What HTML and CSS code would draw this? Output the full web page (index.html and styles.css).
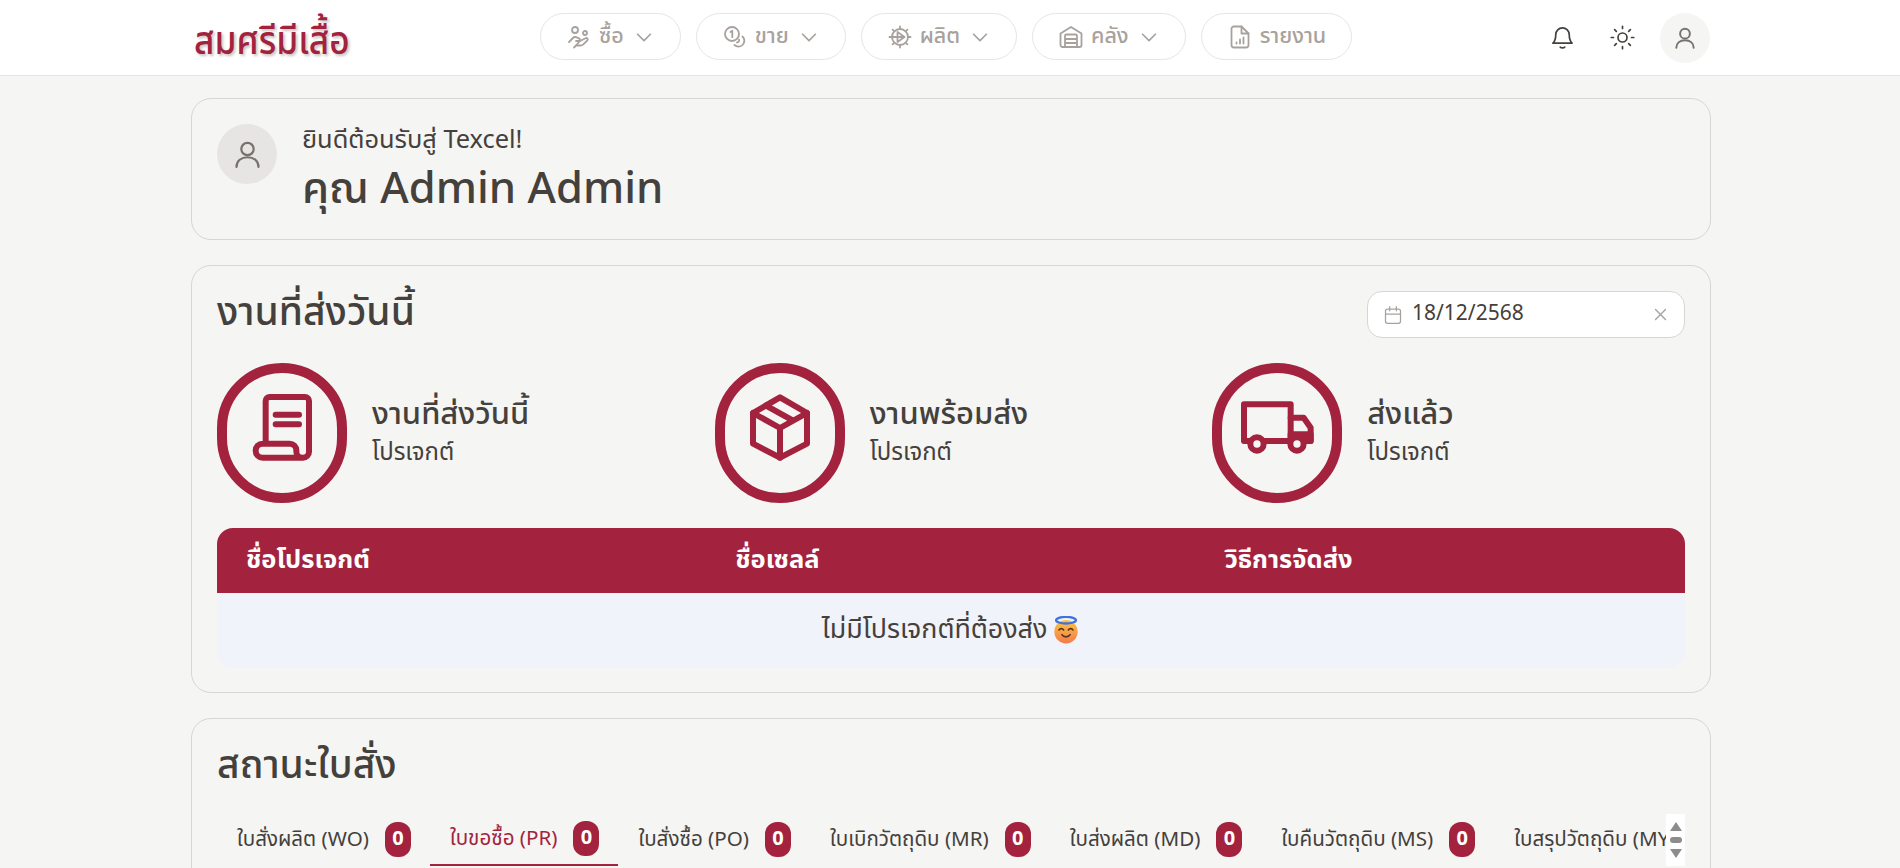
FILE: index.html
```html
<!DOCTYPE html>
<html lang="th">
<head>
    <meta charset="UTF-8">
    <meta name="viewport" content="width=device-width, initial-scale=1.0">
    <title>Texcel</title>
    <link rel="stylesheet" href="styles.css">
</head>
<body>
    <header class="topbar">
        <div class="topbar-inner">
            <div class="logo-wrap"><span class="logo">สมศรีมีเสื้อ</span></div>
            <nav class="nav">
                <a class="pill">
                    <svg class="pill-icon" viewBox="0 0 24 24"><circle cx="8" cy="5" r="3"/><circle cx="18" cy="8" r="2"/><path d="M2 17l4-4c1-1 2-1.200 3-.8l3 1.200c1.500.6 1 2.600-.5 2.600H9m4 0l5.500-2.800c1.600-.8 3 1 1.800 2.300l-4 3.800c-.8.800-1.800 1.200-2.800 1.200H9l-2 2z"/></svg>
                    <span>ซื้อ</span>
                    <svg class="chevron" viewBox="0 0 24 24"><path d="M5 9l7 7 7-7"/></svg>
                </a>
                <a class="pill">
                    <svg class="pill-icon" viewBox="0 0 24 24"><circle cx="9" cy="9" r="7"/><path d="M7.500 7l1.800-1.200v6.400"/><path d="M19.500 11.500a5.800 5.800 0 0 1-8 8.500M16 14.500c.5 1.500-.5 3-2 3"/></svg>
                    <span>ขาย</span>
                    <svg class="chevron" viewBox="0 0 24 24"><path d="M5 9l7 7 7-7"/></svg>
                </a>
                <a class="pill">
                    <svg class="pill-icon" viewBox="0 0 24 24"><circle cx="12" cy="12" r="8"/><path d="M12 1.500v2.500M12 20v2.500M1.500 12H4M20 12h2.500M4.600 4.600l1.800 1.800M17.600 17.600l1.800 1.800M4.600 19.400l1.800-1.800M17.600 6.400l1.800-1.800"/><path d="M9.500 7l7 5-7 5M9.500 7v10M4 12h12.500"/></svg>
                    <span>ผลิต</span>
                    <svg class="chevron" viewBox="0 0 24 24"><path d="M5 9l7 7 7-7"/></svg>
                </a>
                <a class="pill">
                    <svg class="pill-icon" viewBox="0 0 24 24"><path d="M1.500 20V8.500L12 2l10.500 6.500V20a2 2 0 0 1-2 2h-17a2 2 0 0 1-2-2z"/><path d="M6 22V11a1.500 1.500 0 0 1 1.500-1.500h9A1.500 1.500 0 0 1 18 11v11M6 14h12M6 18h12"/></svg>
                    <span>คลัง</span>
                    <svg class="chevron" viewBox="0 0 24 24"><path d="M5 9l7 7 7-7"/></svg>
                </a>
                <a class="pill">
                    <svg class="pill-icon" viewBox="0 0 24 24"><path d="M13.500 1.500H6a2.500 2.500 0 0 0-2.500 2.500v16A2.500 2.500 0 0 0 6 22.500h12a2.500 2.500 0 0 0 2.500-2.500V8.500z"/><path d="M13.500 1.500v7h7M8.500 18.500v-1M12 18.500v-4M15.500 18.500v-6"/></svg>
                    <span>รายงาน</span>
                </a>
            </nav>
            <div class="topbar-right">
                <svg class="tool-icon" viewBox="0 0 24 24"><path d="M6 9.500a6 6 0 0 1 12 0c0 4 1 6 2.500 7.500h-17C5 15.500 6 13.500 6 9.500z"/><path d="M10 20.500c1 1 3 1 4 0"/></svg>
                <svg class="tool-icon" viewBox="0 0 24 24"><circle cx="12" cy="12" r="4"/><path d="M12 2v2M12 20v2M2 12h2M20 12h2M5 5l1.500 1.500M17.500 17.500L19 19M5 19l1.500-1.500M17.500 6.500L19 5"/></svg>
                <div class="avatar avatar-small">
                    <svg viewBox="0 0 24 24"><circle cx="12" cy="8" r="4.500"/><path d="M4 21c0-4.500 3.500-7 8-7s8 2.500 8 7"/></svg>
                </div>
            </div>
        </div>
    </header>

    <main class="content">
        <section class="card welcome">
            <div class="avatar avatar-big">
                <svg viewBox="0 0 24 24"><circle cx="12" cy="8" r="4.500"/><path d="M4 21c0-4.500 3.500-7 8-7s8 2.500 8 7"/></svg>
            </div>
            <div>
                <p class="welcome-text">ยินดีต้อนรับสู่ Texcel!</p>
                <p class="welcome-name">คุณ Admin Admin</p>
            </div>
        </section>

        <section class="card today">
            <div class="card-head">
                <h2>งานที่ส่งวันนี้</h2>
                <div class="date-box">
                    <svg class="date-icon" viewBox="0 0 24 24"><rect x="3" y="5" width="18" height="17" rx="2.500"/><path d="M3 11h18M8 2v5M16 2v5"/></svg>
                    <span class="date-value">18/12/2568</span>
                    <svg class="date-clear" viewBox="0 0 24 24"><path d="M5 5l14 14M19 5L5 19"/></svg>
                </div>
            </div>

            <div class="stats">
                <div class="stat">
                    <div class="ring">
                        <svg viewBox="0 0 240 240"><path d="M71 150V24a12 12 0 0 1 12-12H189a12 12 0 0 1 12 12V176a18 18 0 0 1-18 18H62a21 21 0 0 1 0-42H143a20 20 0 0 1 20 20v4a18 18 0 0 0 18 18"/><path d="M101 65H171M101 94H171"/></svg>
                    </div>
                    <div class="stat-text">
                        <div class="stat-title">งานที่ส่งวันนี้</div>
                        <div class="stat-sub">โปรเจกต์</div>
                    </div>
                </div>
                <div class="stat">
                    <div class="ring">
                        <svg viewBox="0 0 240 240"><path d="M120 13L201 60V152L120 194L39 152V60Z"/><path d="M39 60L120 105L201 60M120 105V194M78 38L158 82"/></svg>
                    </div>
                    <div class="stat-text">
                        <div class="stat-title">งานพร้อมส่ง</div>
                        <div class="stat-sub">โปรเจกต์</div>
                    </div>
                </div>
                <div class="stat">
                    <div class="ring">
                        <svg viewBox="0 0 240 240"><path d="M40 144H21V34H161V144H80"/><path d="M161 74H200L221 104V144H200"/><path class="truck-fill" d="M161 124H221V144H161Z"/><circle class="wheel" cx="60" cy="153" r="20"/><circle class="wheel" cx="180" cy="153" r="20"/></svg>
                    </div>
                    <div class="stat-text">
                        <div class="stat-title">ส่งแล้ว</div>
                        <div class="stat-sub">โปรเจกต์</div>
                    </div>
                </div>
            </div>

            <div class="table">
                <div class="table-head">
                    <div>ชื่อโปรเจกต์</div>
                    <div>ชื่อเซลล์</div>
                    <div>วิธีการจัดส่ง</div>
                </div>
                <div class="table-empty">
                    <span>ไม่มีโปรเจกต์ที่ต้องส่ง</span>
                    <svg class="emoji" viewBox="0 0 24 24"><defs><linearGradient id="face" x1="0" y1="0" x2="0" y2="1"><stop offset="0" stop-color="#fdc53f"/><stop offset="1" stop-color="#f47a4e"/></linearGradient></defs><circle cx="12" cy="13.500" r="10" fill="url(#face)" stroke="none"/><ellipse cx="12" cy="3.600" rx="8.500" ry="2.800" fill="none" stroke="#3f72e0" stroke-width="2"/><path d="M6 12c1-1.500 3-1.500 4 0M14 12c1-1.500 3-1.500 4 0M8.500 16c1.500 2.500 5.500 2.500 7 0" fill="none" stroke="#5a3420" stroke-width="1.400" stroke-linecap="round"/></svg>
                </div>
            </div>
        </section>

        <section class="card orders">
            <h2>สถานะใบสั่ง</h2>
            <div class="tabs-row">
                <div class="tabs">
                    <div class="tab"><span>ใบสั่งผลิต (WO)</span><b class="count">0</b></div>
                    <div class="tab tab-active"><span>ใบขอซื้อ (PR)</span><b class="count">0</b></div>
                    <div class="tab"><span>ใบสั่งซื้อ (PO)</span><b class="count">0</b></div>
                    <div class="tab"><span>ใบเบิกวัตถุดิบ (MR)</span><b class="count">0</b></div>
                    <div class="tab"><span>ใบส่งผลิต (MD)</span><b class="count">0</b></div>
                    <div class="tab"><span>ใบคืนวัตถุดิบ (MS)</span><b class="count">0</b></div>
                    <div class="tab"><span>ใบสรุปวัตถุดิบ (MY)</span><b class="count">0</b></div>
                </div>
                <div class="scrollbar">
                    <i class="arrow-up"></i>
                    <i class="thumb"></i>
                    <i class="arrow-down"></i>
                </div>
            </div>
        </section>
    </main>
</body>
</html>
```

FILE: styles.css
```css
html, body {
    height: 100%;
    overflow: hidden;
}

body {
    margin: 0;
    background-color: #f5f5f3;
    color: #44403c;
    font-family: "Noto Sans Thai", "Noto Sans", "Liberation Sans", sans-serif;
}

p, h2 {
    margin: 0;
}

svg {
    display: block;
    fill: none;
    stroke: currentColor;
    stroke-linecap: round;
    stroke-linejoin: round;
}

.topbar {
    height: 75px;
    background: #fff;
    border-bottom: 1px solid #e7e5e4;
}

.topbar-inner {
    width: 1520px;
    height: 100%;
    margin-left: 191px;
    display: flex;
    align-items: center;
}

.logo-wrap {
    width: 349px;
}

.logo {
    display: inline-block;
    margin: 6px 0 0 3px;
    font-family: "Liberation Serif", "Noto Sans Thai", serif;
    font-size: 40px;
    font-weight: 500;
    line-height: 50px;
    color: #a3233f;
    text-shadow: 2px 2px 3px #c9c4c0;
    transform: scaleX(0.88);
    transform-origin: left center;
}

.nav {
    margin-bottom: 2px;
    display: flex;
    gap: 15px;
}

.pill {
    height: 47px;
    box-sizing: border-box;
    padding: 0 25px 0 26px;
    display: flex;
    align-items: center;
    gap: 8px;
    border: 1px solid #e7e5e4;
    border-radius: 24px;
    color: #a8a29e;
    font-size: 21.500px;
    font-weight: 500;
}

.pill-icon {
    width: 24px;
    height: 24px;
    stroke-width: 1.800;
}

.chevron {
    width: 22px;
    height: 22px;
    margin-left: 1px;
    stroke-width: 1.800;
}

.topbar-right {
    margin-left: auto;
    margin-right: 1px;
    display: flex;
    align-items: center;
    color: #44403c;
}

.tool-icon {
    width: 27px;
    height: 27px;
    margin-right: 33px;
    stroke-width: 1.500;
}

.avatar {
    display: flex;
    align-items: center;
    justify-content: center;
    border-radius: 50%;
    color: #78716c;
}

.avatar svg {
    width: 26px;
    height: 26px;
    stroke-width: 1.800;
}

.avatar-small {
    width: 50px;
    height: 50px;
    margin-left: -9px;
    background: #f5f5f4;
}

.avatar-big {
    width: 60px;
    height: 60px;
    flex-shrink: 0;
    background: #e7e5e4;
}

.avatar-big svg {
    width: 33px;
    height: 33px;
    stroke-width: 1.600;
}

.content {
    width: 1520px;
    margin: 22px 0 0 191px;
    display: flex;
    flex-direction: column;
    gap: 25px;
}

.card {
    box-sizing: border-box;
    padding: 25px;
    border: 1px solid #d6d6d3;
    border-radius: 20px;
}

.welcome {
    height: 142px;
    display: flex;
    gap: 25px;
}

.welcome-text {
    font-size: 25.400px;
    line-height: 32px;
}

.welcome-name {
    font-size: 43.500px;
    font-weight: 500;
    line-height: 68px;
}

.today {
    height: 428px;
}

.card-head {
    display: flex;
    justify-content: space-between;
    align-items: flex-start;
}

h2 {
    font-size: 39px;
    font-weight: 500;
    line-height: 46px;
}

.date-box {
    width: 318px;
    height: 47px;
    box-sizing: border-box;
    padding: 0 15px;
    display: flex;
    align-items: center;
    background: #fff;
    border: 1px solid #d6d6d3;
    border-radius: 15px;
}

.date-icon {
    width: 20px;
    height: 20px;
    color: #a8a29e;
    stroke-width: 1.500;
}

.date-value {
    margin-left: 9px;
    margin-bottom: 3px;
    font-size: 21px;
}

.date-clear {
    width: 17px;
    height: 17px;
    margin-left: auto;
    color: #a8a29e;
    stroke-width: 2;
}

.stats {
    margin-top: 25px;
    display: grid;
    grid-template-columns: repeat(3, 1fr);
    gap: 25px;
}

.stat {
    display: flex;
    align-items: center;
    gap: 25px;
}

.stat-text {
    padding-bottom: 3px;
}

.ring {
    width: 130px;
    height: 140px;
    box-sizing: border-box;
    display: flex;
    align-items: center;
    justify-content: center;
    border: 10px solid #a3233f;
    border-radius: 65px;
    color: #a3233f;
}

.ring svg {
    width: 80px;
    height: 80px;
    stroke-width: 18;
}

.truck-fill {
    fill: currentColor;
}

.wheel {
    fill: #f5f5f3;
}

.stat-title {
    font-size: 31px;
    font-weight: 500;
    line-height: 42px;
}

.stat-sub {
    font-size: 24px;
    line-height: 34px;
}

.table {
    margin-top: 25px;
    border-radius: 16px;
    overflow: hidden;
}

.table-head {
    height: 65px;
    box-sizing: border-box;
    padding-bottom: 2px;
    display: grid;
    grid-template-columns: repeat(3, 1fr);
    align-items: center;
    background: #a3233f;
    color: #fff;
    font-size: 25.500px;
    font-weight: 700;
}

.table-head div {
    padding-left: 29px;
}

.table-empty {
    height: 75px;
    box-sizing: border-box;
    padding-bottom: 2px;
    display: flex;
    align-items: center;
    justify-content: center;
    gap: 5px;
    background: #f0f3f9;
    font-size: 26.800px;
}

.emoji {
    width: 28px;
    height: 28px;
}

.orders {
    height: 300px;
}

.tabs-row {
    margin-top: 24px;
    height: 52px;
    display: flex;
}

.tabs {
    flex: 1;
    min-width: 0;
    display: flex;
    overflow: hidden;
}

.tab {
    flex-shrink: 0;
    box-sizing: border-box;
    height: 52px;
    padding: 0 19px 2px 20px;
    display: flex;
    align-items: center;
    gap: 16px;
    font-size: 20.600px;
}

.tab-active {
    border-bottom: 2px solid #a3233f;
    color: #a3233f;
}

.count {
    width: 26px;
    height: 35px;
    display: flex;
    align-items: center;
    justify-content: center;
    border-radius: 12px;
    background: #a3233f;
    color: #fff;
    font-size: 20px;
}

.scrollbar {
    width: 19px;
    flex-shrink: 0;
    display: flex;
    flex-direction: column;
    align-items: center;
    justify-content: center;
    gap: 6px;
    background: #fff;
}

.arrow-up, .arrow-down {
    width: 0;
    height: 0;
    border-left: 6px solid transparent;
    border-right: 6px solid transparent;
}

.arrow-up {
    border-bottom: 9px solid #8c8c8c;
}

.arrow-down {
    border-top: 9px solid #8c8c8c;
}

.thumb {
    width: 12px;
    height: 6px;
    border-radius: 3px;
    background: #8c8c8c;
}
```
